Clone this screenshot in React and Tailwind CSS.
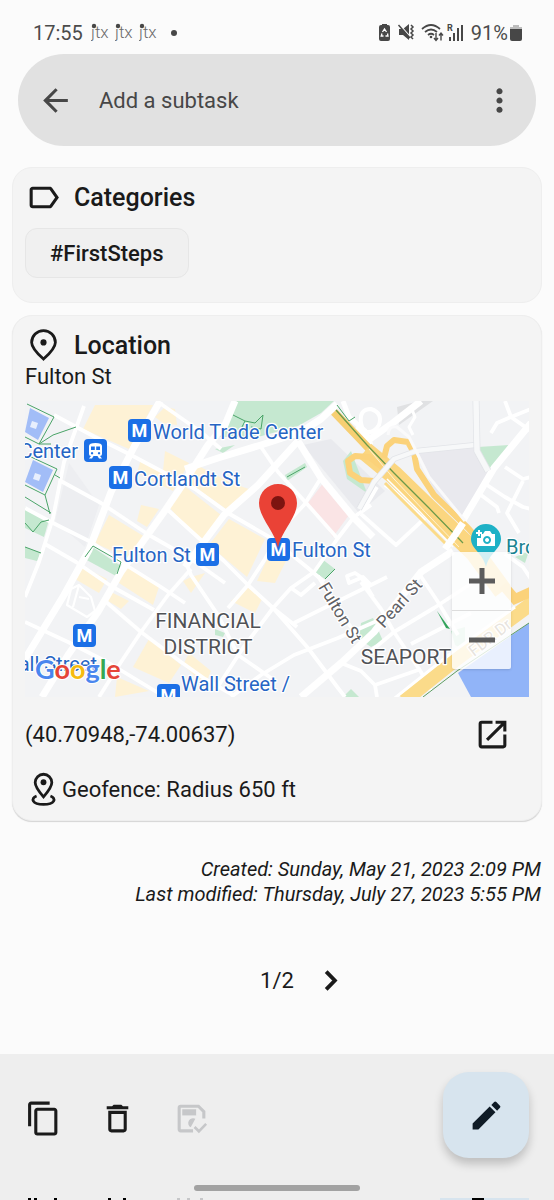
import React, { useState } from "react";
import {
  MdArrowBack,
  MdContentCopy,
  MdEdit,
  MdMoreVert,
  MdOpenInNew,
  MdOutlineDelete,
  MdOutlineLabel,
} from "react-icons/md";

// Minor streets, drawn thin
const streets = [
  "M59 5 L39 61 L28 117 L14 161 L0 196",
  "M29 14 L70 36 L106 54 L170 88 L203 112 L246 137 L283 167 L299 181",
  "M34 79 L76 102 L124 134 L166 158 L200 182",
  "M0 107 L26 121 L66 141 L96 161 L136 186 L160 202",
  "M20 143 L51 161 L86 185 L129 209",
  "M80 200 L116 231 L156 261 L180 278 L208 294",
  "M0 221 L43 241 L84 262 L140 296",
  "M166 168 L143 194 L116 231 L96 261 L74 296",
  "M136 3 L176 31 L196 48",
  "M143 109 L166 130 L199 160 L223 184 L248 207 L283 247 L313 287 L320 296",
  "M236 46 L253 71 L283 104 L313 138",
  "M296 77 L279 104 L258 126 L240 158 L223 184 L203 207",
  "M346 104 L329 116 L313 137 L289 171 L266 187 L248 207 L218 247 L190 290",
  "M156 150 L166 174 L193 214 L213 254 L246 277",
  "M362 176 L346 184 L299 207 L269 222",
  "M248 207 L272 226",
  "M370 212 L313 237 L269 254 L236 274 L206 296",
  "M293 175 L313 208 L336 240",
  "M266 187 L276 194 L290 182",
  "M346 184 L338 176 L324 182 L322 175 L330 172 L336 176 L348 196",
  "M393 171 L413 201 L433 234",
  "M336 181 L356 208 L369 231 L396 271 L406 290",
  "M450 180 L409 207 L369 231 L346 250",
  "M446 212 L386 243",
  "M316 262 L336 270 L350 284 L352 296",
  "M336 113 L371 144 L400 117 L379 97 L360 84",
  "M338 110 L352 86",
  "M396 268 L350 284",
  "M480 0 L486 16 L506 30",
  "M506 8 L486 16 L472 22 L466 32",
  "M480 66 L498 78 L506 76",
  "M462 84 L480 96 L498 106 L506 108",
  "M456 94 L472 106 L474 112",
  "M498 80 L482 112 L494 132",
  "M480 153 L498 166 L506 178",
];

const mainStreets = [
  "M135 0 L109 46 L86 91 L64 149 L39 194 L0 258",
  "M210 0 L200 24 L183 44 L160 80 L139 111 L96 171 L73 211 L43 254 L17 296",
  "M312 3 L296 18 L276 31 L236 44 L193 57 L160 68",
  "M273 40 L296 77 L329 117 L348 136",
  "M273 40 L233 84 L199 114 L172 150 L160 166",
  "M428 150 L396 171 L370 204 L349 231 L316 262 L276 296",
  "M506 22 L469 67 L453 94 L434 126",
  "M396 0 L369 21 L345 38 L330 28",
];

const commercial = [
  "M70 4 L128 4 L104 48 L58 28 Z",
  "M140 6 L150 8 L152 24 L138 22 L130 16 Z",
  "M140 50 L164 62 L148 90 L112 72 L116 58 L138 70 Z",
  "M116 104 L134 108 L122 126 L112 120 Z",
  "M84 114 L120 136 L104 158 L70 142 Z",
  "M168 62 L206 82 L224 88 L204 110 L164 82 Z",
  "M158 84 L196 114 L176 142 L144 106 Z",
  "M204 118 L240 138 L222 176 L184 144 Z",
  "M54 164 L82 178 L74 192 L50 178 Z",
  "M100 162 L134 186 L128 204 L94 182 Z",
  "M84 190 L104 200 L96 208 L80 198 Z",
  "M246 150 L262 158 L250 182 L232 180 Z",
  "M222 186 L238 196 L230 212 L206 200 Z",
  "M166 176 L180 172 L166 192 L158 180 Z",
  "M124 238 L156 264 L144 282 L108 266 Z",
  "M164 252 L186 270 L180 284 L158 264 Z",
  "M92 276 L124 290 L90 296 Z",
];

const stations = [
  { x: 103, y: 18 },
  { x: 84, y: 65 },
  { x: 171, y: 142 },
  { x: 242, y: 137 },
  { x: 48, y: 223 },
  { x: 132, y: 283 },
];

function StationBadge({ x, y }) {
  return (
    <g>
      <rect x={x} y={y} width="23" height="23" rx="4" fill="#1b6fe6" />
      <text
        x={x + 11.5}
        y={y + 18}
        fontSize="18"
        fontWeight="700"
        fill="#fff"
        textAnchor="middle"
      >
        M
      </text>
    </g>
  );
}

function CityMap() {
  return (
    <svg
      viewBox="0 0 504 296"
      className="block w-full h-auto"
      fontFamily="Roboto, sans-serif"
      role="img"
      aria-label="Map of Fulton St"
    >
      <rect width="504" height="296" fill="#f2f3f5" />

      {/* blocks */}
      <path d="M44 62 L74 104 L60 146 L30 120 Z" fill="#edeef1" />
      <path d="M278 44 L306 38 L360 90 L334 112 Z" fill="#e9eaee" />
      <path d="M391 50 L449 46 L463 71 L438 116 L410 92 Z" fill="#e9e9ee" />
      <path d="M372 6 L394 0 L408 0 L374 24 Z" fill="#e0e1e3" />
      {commercial.map((d) => (
        <path key={d} d={d} fill="#fef2d5" />
      ))}
      <path d="M299 81 L324 114 L308 136 L283 102 Z" fill="#fae4e5" />

      {/* parks */}
      <g fill="#c5e8d0">
        <path d="M212 0 L309 0 L296 12 L273 25 L233 36 L194 36 Z" />
        <path d="M190 48 L210 44 L198 52 Z" />
        <path d="M0 106 L24 119 L19 136 L0 127 Z" />
        <path d="M66 145 L96 165 L91 175 L58 157 Z" />
        <path d="M0 146 L16 152 L12 160 L0 157 Z" />
        <path d="M297 158 L310 168 L300 178 L288 170 Z" />
        <path d="M453 46 L484 44 L464 71 Z" />
        <path d="M336 222 L348 217 L358 240 L346 246 L334 238 Z" />
        <path d="M318 60 L326 50 L342 92 L322 78 Z" />
        <path d="M260 74 L280 62 L282 66 L262 80 Z" />
        <path d="M426 230 L440 226 L440 250 L430 244 Z" />
        <path d="M190 228 L200 232 L198 236 L190 234 Z" />
        <path d="M318 296 L326 288 L334 296 Z" />
        <path d="M490 156 L504 150 L500 162 Z" />
      </g>

      {/* memorial pools */}
      <g fill="#a2bdf7">
        <path d="M5 7 L24 17 L13 39 L0 31 Z" />
        <path d="M8 59 L28 69 L18 91 L0 81 Z" />
      </g>
      <path d="M7 20 l6 2 l-2 6 l-6 -2 Z M10 72 l6 2 l-2 6 l-6 -2 Z" fill="#e8effd" />

      <g fill="none" stroke="#fff" strokeLinejoin="round">
        {streets.map((d) => (
          <path key={d} d={d} strokeWidth="3.8" />
        ))}
        {mainStreets.map((d) => (
          <path key={d} d={d} strokeWidth="7" />
        ))}
        <path
          d="M46 188 L54 184 L66 196 L70 210 L62 216 L42 204 Z M54 184 L48 206 M54 196 L64 198"
          strokeWidth="2.2"
        />
        <path d="M336 22 Q334 8 346 8 Q358 12 354 24 Q348 34 338 30 Z" strokeWidth="4" />
        <path d="M386 6 L390 16 L384 26 L388 34" strokeWidth="3" />
        <path d="M318 0 L324 16 L340 30 L346 44" strokeWidth="5" />
      </g>

      {/* footpaths */}
      <g fill="none" stroke="#4aa468" strokeWidth="1">
        <path d="M2 3 L29 16 L14 43 L0 36 M14 43 L28 34 L51 26 M14 43 L26 43" />
        <path d="M4 55 L32 68 L20 94 L0 84 M20 94 L25 113 M0 96 L26 112 M30 74 L35 77" />
        <path d="M0 122 L8 131 L16 121 L24 119 M60 156 L68 145 L96 161 L92 173" />
        <path d="M208 14 L220 20 L230 22 L238 14 L236 28 L226 26 M220 20 L212 36" />
        <path d="M310 168 L300 178 M262 76 L280 66 M0 146 L16 152" />
        <path d="M312 4 L324 20 L330 16" />
      </g>
      <path d="M412 210 L425 228 L421 227 Z" fill="#34a35c" />

      {/* highways */}
      <g fill="none" strokeLinejoin="round">
        <path d="M309 11 L333 36 L369 74" stroke="#f7cf72" strokeWidth="8" />
        <path d="M340 50 L369 74 L403 107 L450 152 L478 190" stroke="#fbd680" strokeWidth="19" />
        <path
          d="M359 57 L362 45 L369 39 L383 41 L389 52 L392 68 L409 94 L443 127 L460 146"
          stroke="#fbd27a"
          strokeWidth="6"
        />
        <path
          d="M349 80 L336 79 L325 72 L323 60 L330 55 L344 56 L362 70"
          stroke="#fbd27a"
          strokeWidth="6"
        />
        <path d="M344 48 L369 78 L403 114 L434 146" stroke="#fff3cf" strokeWidth="1" />
        <path d="M362 78 L396 112 L428 146" stroke="#fff" strokeWidth="1.5" />
        <path d="M360 82 L394 116 L424 146" stroke="#fbdb8a" strokeWidth="3" />
        <path d="M311 9 L342 44 L369 72 L403 106 L438 142" stroke="#6c9a4a" strokeWidth="1.3" />
      </g>

      {/* river */}
      <path d="M433 272 L504 222 L504 296 L446 296 Z" fill="#91b4f8" />
      <path d="M379 300 L429 260 L510 200" stroke="#fbdb8a" strokeWidth="14" fill="none" />
      <path d="M478 184 L490 198 L508 190" stroke="#fbd27a" strokeWidth="10" fill="none" />
      <path d="M398 296 L432 270 L504 222" stroke="#5e9c62" strokeWidth="1" fill="none" />
      <path d="M366 300 L429 250 L490 206" stroke="#fff" strokeWidth="3" fill="none" />

      <g fill="none" strokeLinejoin="round">
        <path
          d="M450 44 L391 50 L369 58 L349 81 L334 108"
          stroke="#e2e4e8"
          strokeWidth="6"
        />
        <path d="M450 44 L391 50 L369 58 L349 81 L334 108" stroke="#f7f8f9" strokeWidth="4.5" />
        <path d="M451 0 L452 50 L463 70" stroke="#e2e4e8" strokeWidth="7" />
        <path d="M451 0 L452 50 L463 70" stroke="#f7f8f9" strokeWidth="5.5" />
        <path d="M363 34 Q364 24 372 26 L384 36 L404 76 L440 120" stroke="#fafafb" strokeWidth="3" />
        <path d="M438 122 L430 134 L420 148" stroke="#fff" strokeWidth="7" />
      </g>

      {/* stations */}
      {stations.map((s) => (
        <StationBadge key={`${s.x}-${s.y}`} x={s.x} y={s.y} />
      ))}
      <rect x="59" y="38" width="23" height="23" rx="4" fill="#1b6fe6" />
      <path
        fill="#fff"
        fillRule="evenodd"
        d="M64 45 q0 -3 6.500 -3 q6.500 0 6.500 3 v8 q0 2 -2 2 l2 2.500 h-3 l-1.500 -2.500 h-4 l-1.500 2.500 h-3 l2 -2.500 q-2 0 -2 -2 Z M66 45.500 v3.500 h3.800 v-3.500 Z M71.200 45.500 v3.500 h3.800 v-3.500 Z M67 51 a1.200 1.200 0 1 0 .1 0 Z M74 51 a1.200 1.200 0 1 0 .1 0 Z"
      />

      {/* labels */}
      <g
        fontSize="20"
        fill="#2665c4"
        stroke="#fff"
        strokeWidth="2.5"
        strokeLinejoin="round"
        paintOrder="stroke"
      >
        <text x="128" y="38">World Trade Center</text>
        <text x="53" y="57" textAnchor="end">Center</text>
        <text x="109" y="85">Cortlandt St</text>
        <text x="87" y="161">Fulton St</text>
        <text x="267" y="156">Fulton St</text>
        <text x="156" y="290">Wall Street /</text>
        <text x="72" y="270" textAnchor="end">Wall Street</text>
        <text x="481" y="153" fill="#1b8391">Brooklyn</text>
        <g fill="#505256" fontSize="21" textAnchor="middle">
          <text x="183" y="227">FINANCIAL</text>
          <text x="183" y="253">DISTRICT</text>
          <text x="381" y="263">SEAPORT</text>
        </g>
        <g fill="#5f6165" fontSize="17">
          <text transform="translate(293 186) rotate(59)">Fulton St</text>
          <text transform="translate(359 228) rotate(-48)">Pearl St</text>
          <text transform="translate(449 256) rotate(-38)" fontSize="16" fill="#85755a">
            FDR Dr
          </text>
        </g>
      </g>

      {/* photo spot */}
      <path d="M446 138 A15 15 0 1 1 476 138 C476 148 464 152 461 166 C458 152 446 148 446 138 Z" fill="#1eb1c6" />
      <path
        fill="#fff"
        fillRule="evenodd"
        d="M456 133 h2 l2 -3 h5 l2 3 h3 v12 h-18 v-8 h4 Z M462 135 a4 4 0 1 0 .1 0 Z M462 137 a2 2 0 1 0 .1 0 Z M453 129 h2 v2 h2 v2 h-2 v2 h-2 v-2 h-2 v-2 h2 Z"
      />

      {/* marker */}
      <path
        d="M253 147 C250 130 234 117 234 102 A19 19 0 0 1 272 102 C272 117 256 130 253 147 Z"
        fill="#ea4236"
      />
      <circle cx="253" cy="102" r="7" fill="#7d1410" />

      <text
        x="10"
        y="278"
        fontSize="27"
        fontFamily="Lato, sans-serif"
        fontWeight="700"
        stroke="#fff"
        strokeWidth="2"
        paintOrder="stroke"
      >
        <tspan fill="#4a86ee">G</tspan>
        <tspan fill="#e54538">o</tspan>
        <tspan fill="#f6bb10">o</tspan>
        <tspan fill="#4a86ee">g</tspan>
        <tspan fill="#36a853">l</tspan>
        <tspan fill="#e54538">e</tspan>
      </text>
    </svg>
  );
}

function JtxIcon() {
  return (
    <svg width="20" height="20" viewBox="0 0 20 20">
      <text x="0" y="15" fontSize="17" fontWeight="300" fontFamily="Roboto, sans-serif" fill="#6a6a6a">
        jtx
      </text>
      <circle cx="3" cy="3" r="2.200" fill="#474747" />
    </svg>
  );
}

function StatusIcons() {
  return (
    <svg width="89" height="20" viewBox="0 0 89 20" fill="#474747">
      {/* battery care */}
      <path d="M4 2 V1 h5 v1 h1 q2 0 2 2 v12 q0 2 -2 2 h-7 q-2 0 -2 -2 v-12 q0 -2 2 -2 Z" />
      <path
        d="M4.500 9 L6.500 6 L8.500 9 M9.500 10.500 L10 13 H7.500 M5.500 13 H3.200 L4 10.500"
        fill="none"
        stroke="#fff"
        strokeWidth="1.300"
      />
      {/* muted */}
      <path d="M21 6 h4 l6 -5 v16 l-6 -5 h-4 Z" />
      <path d="M21 1 L34 16" stroke="#fbfbfb" strokeWidth="1.500" />
      <path d="M20.500 2 L32 15" stroke="#474747" strokeWidth="1.500" />
      <path
        d="M33 2 l2 2 l-2 2 l2 2 l-2 2 l2 2 l-2 2 l2 2"
        fill="none"
        stroke="#474747"
        strokeWidth="1.500"
      />
      {/* wifi */}
      <g fill="none" stroke="#474747" strokeWidth="1.700">
        <path d="M44 6 Q53 -2 62 6" />
        <path d="M47 9 Q53 4 59 9" />
        <path d="M50 12 Q53 9.500 56 12" />
        <path d="M58 10 v7 M56 15 l2 2.500 l2 -2.500 M63 17.500 v-7 M61 12.500 l2 -2.500 l2 2.500" strokeWidth="1.400" />
      </g>
      <circle cx="53" cy="14" r="1.300" />
      {/* signal */}
      <text x="69" y="8" fontSize="9" fontWeight="700" fontFamily="Roboto, sans-serif">
        R
      </text>
      <path d="M71 14 h2 v4 h-2 Z M75 10 h2 v8 h-2 Z M79 5 h2 v13 h-2 Z M83 2 h2 v16 h-2 Z" />
    </svg>
  );
}

function PlaceIcon() {
  return (
    <svg
      width="37"
      height="37"
      viewBox="0 0 24 24"
      fill="none"
      stroke="currentColor"
      strokeWidth="1.800"
    >
      <path d="M12 20.800 C7 16.300 4.300 13 4.300 10 a7.700 7.700 0 0 1 15.400 0 C19.700 13 17 16.300 12 20.800 Z" />
      <circle cx="12" cy="10" r="2" fill="currentColor" stroke="none" />
    </svg>
  );
}

function GeofenceIcon() {
  return (
    <svg
      width="37"
      height="37"
      viewBox="0 0 24 24"
      fill="none"
      stroke="currentColor"
      strokeWidth="1.800"
    >
      <path d="M12 16.800 C8.700 13 6.600 10.300 6.600 7.500 a5.400 5.400 0 0 1 10.800 0 C17.400 10.300 15.300 13 12 16.800 Z" />
      <circle cx="12" cy="7.300" r="1.900" fill="currentColor" stroke="none" />
      <path d="M7.500 16.200 C3.500 17.700 4.500 21.700 12 21.700 S20.500 17.700 16.500 16.200" />
    </svg>
  );
}

function SaveDoneIcon() {
  return (
    <svg width="37" height="37" viewBox="0 0 24 24" fill="none" stroke="currentColor" strokeWidth="2">
      <path d="M13 20 H5 Q4 20 4 19 V5 Q4 4 5 4 H16.500 L20 7.500 V12" />
      <path d="M6 6 h9 v4 h-9 Z" fill="currentColor" stroke="none" />
      <path d="M14.500 12.200 a3 3 0 1 0 -3 5.500 Z" fill="currentColor" stroke="none" />
      <path d="M14 17.500 L16.800 20.300 L21.500 15.500" strokeWidth="1.700" />
    </svg>
  );
}

const actions = [
  { label: "Copy", icon: <MdContentCopy size={37} /> },
  { label: "Delete", icon: <MdOutlineDelete size={37} /> },
  { label: "Save", icon: <SaveDoneIcon />, disabled: true },
];

const card = "bg-[#f4f4f4] rounded-[20px] px-3 pt-[11px] border border-[#eeeeee]";

export default function App() {
  const [subtask, setSubtask] = useState("");

  return (
    <div className="min-h-screen flex flex-col bg-[#fbfbfb] text-[#1a1a1a] font-[Roboto,sans-serif]">
      {/* STATUS BAR */}
      <div className="h-[54px] pt-3 pl-[33px] pr-8 flex items-center justify-between text-[20px] text-[#4b4b4b]">
        <div className="flex items-center gap-1">
          <span className="mr-1">17:55</span>
          <JtxIcon />
          <JtxIcon />
          <JtxIcon />
          <span className="ml-2 size-[6px] rounded-full bg-[#474747]" />
        </div>
        <div className="flex items-center">
          <StatusIcons />
          <span className="pl-1 pr-[2px]">91%</span>
          <svg width="12" height="18" viewBox="0 0 12 18">
            <path d="M3 1 h6 v2 h3 v4 h-12 v-4 h3 Z" fill="#bdbdbd" />
            <path d="M0 5 h12 v10 q0 2 -2 2 h-8 q-2 0 -2 -2 Z" fill="#474747" />
          </svg>
        </div>
      </div>

      {/* TOP BAR */}
      <header className="mx-[18px] h-[92px] rounded-full bg-[#e1e1e1] text-[#474747] flex items-center">
        <button className="w-[74px] h-[74px] flex items-center justify-center" aria-label="Back">
          <MdArrowBack size={37} />
        </button>
        <input
          className="flex-1 min-w-0 px-[7px] text-[22px] bg-transparent outline-none placeholder:text-[#474747]"
          placeholder="Add a subtask"
          aria-label="Add a subtask"
          value={subtask}
          onChange={(e) => setSubtask(e.target.value)}
        />
        <button className="w-[74px] h-[74px] flex items-center justify-center" aria-label="More options">
          <MdMoreVert size={37} />
        </button>
      </header>

      <main className="mt-[21px] px-3 flex flex-col gap-3">
        {/* CATEGORIES */}
        <section className={`${card} pb-6`}>
          <h2 className="flex items-center gap-3 text-[25px] leading-[37px] font-medium">
            <MdOutlineLabel size={37} />
            Categories
          </h2>
          <button className="mt-3 h-[50px] px-6 rounded-xl bg-[#f0f0f0] border border-[#e6e6e6] text-[22px] font-medium">
            #FirstSteps
          </button>
        </section>

        {/* LOCATION */}
        <section className={`${card} pb-3 shadow-[0_1px_1px_#d4d4d4]`}>
          <h2 className="flex items-center gap-3 text-[25px] leading-[37px] font-medium">
            <PlaceIcon />
            Location
          </h2>
          <p className="text-[22px] leading-[26px]">Fulton St</p>
          <div className="relative mt-[11px]">
            <CityMap />
            <div className="absolute right-[18px] bottom-[28px] w-[59px] rounded-xs bg-white/80 shadow-sm text-[#5c5c5c] divide-y divide-[#dddddd]">
              <button className="h-[59px] w-full flex items-center justify-center" aria-label="Zoom in">
                <svg width="26" height="26" viewBox="0 0 26 26" fill="currentColor">
                  <path d="M10.500 0 h5 v10.500 h10.500 v5 h-10.500 v10.500 h-5 v-10.500 h-10.500 v-5 h10.500 Z" />
                </svg>
              </button>
              <button className="h-[58px] w-full flex items-center justify-center" aria-label="Zoom out">
                <svg width="26" height="26" viewBox="0 0 26 26" fill="currentColor">
                  <path d="M0 10.500 h26 v5 h-26 Z" />
                </svg>
              </button>
            </div>
          </div>
          <div className="flex items-center justify-between text-[22px]">
            <span>(40.70948,-74.00637)</span>
            <button className="w-[74px] h-[74px] flex items-center justify-center" aria-label="Open in maps">
              <MdOpenInNew size={37} />
            </button>
          </div>
          <div className="flex items-center text-[22px] leading-[37px]">
            <GeofenceIcon />
            Geofence: Radius 650 ft
          </div>
        </section>
      </main>

      <div className="mt-9 pr-[13px] text-right text-[20px] leading-[25px] italic">
        <p>Created: Sunday, May 21, 2023 2:09 PM</p>
        <p>Last modified: Thursday, July 27, 2023 5:55 PM</p>
      </div>

      {/* PAGER */}
      <nav className="mt-9 mb-9 flex items-center justify-center text-[22px]">
        <span className="w-[74px]" />
        <span>1/2</span>
        <button className="w-[74px] h-[74px] flex items-center justify-center" aria-label="Next entry">
          <svg width="37" height="37" viewBox="0 0 24 24" fill="none" stroke="currentColor" strokeWidth="2.500">
            <path d="M9.200 6.300 L14.800 12 L9.200 17.700" />
          </svg>
        </button>
      </nav>

      {/* BOTTOM BAR */}
      <footer className="mt-auto bg-[#eeeeee] pt-[18px]">
        <div className="flex justify-between pl-[6px] pr-[25px]">
          <div className="flex items-center pt-[6px]">
            {actions.map((a) => (
              <button
                key={a.label}
                aria-label={a.label}
                disabled={a.disabled}
                className="w-[74px] h-[74px] flex items-center justify-center disabled:text-[#c6c7c9]"
              >
                {a.icon}
              </button>
            ))}
          </div>
          <button
            className="w-[86px] h-[86px] rounded-[26px] bg-[#d7e4ee] text-[#0f1b26] flex items-center justify-center shadow-[0_6px_10px_#00000033]"
            aria-label="Edit"
          >
            <MdEdit size={37} />
          </button>
        </div>
        <div className="mx-auto mt-[27px] w-[166px] h-[6px] rounded-full bg-[#a2a2a2]" />
        {/* top edge of the row below */}
        <svg className="block mt-[7px] w-full" height="2" viewBox="0 0 554 2" preserveAspectRatio="none">
          <path d="M28 0 h3 v2 h-3 Z M34 0 h3 v2 h-3 Z M54 0 h3 v2 h-3 Z M108 0 h3 v2 h-3 Z M123 0 h3 v2 h-3 Z" />
          <path d="M177 0 h3 v2 h-3 Z M187 0 h3 v2 h-3 Z M200 0 h3 v2 h-3 Z" fill="#c6c7c9" />
          <path d="M440 0 h89 v2 h-89 Z" fill="#d7e4ee" />
          <path d="M472 0 h12 v2 h-12 Z" />
        </svg>
      </footer>
    </div>
  );
}
